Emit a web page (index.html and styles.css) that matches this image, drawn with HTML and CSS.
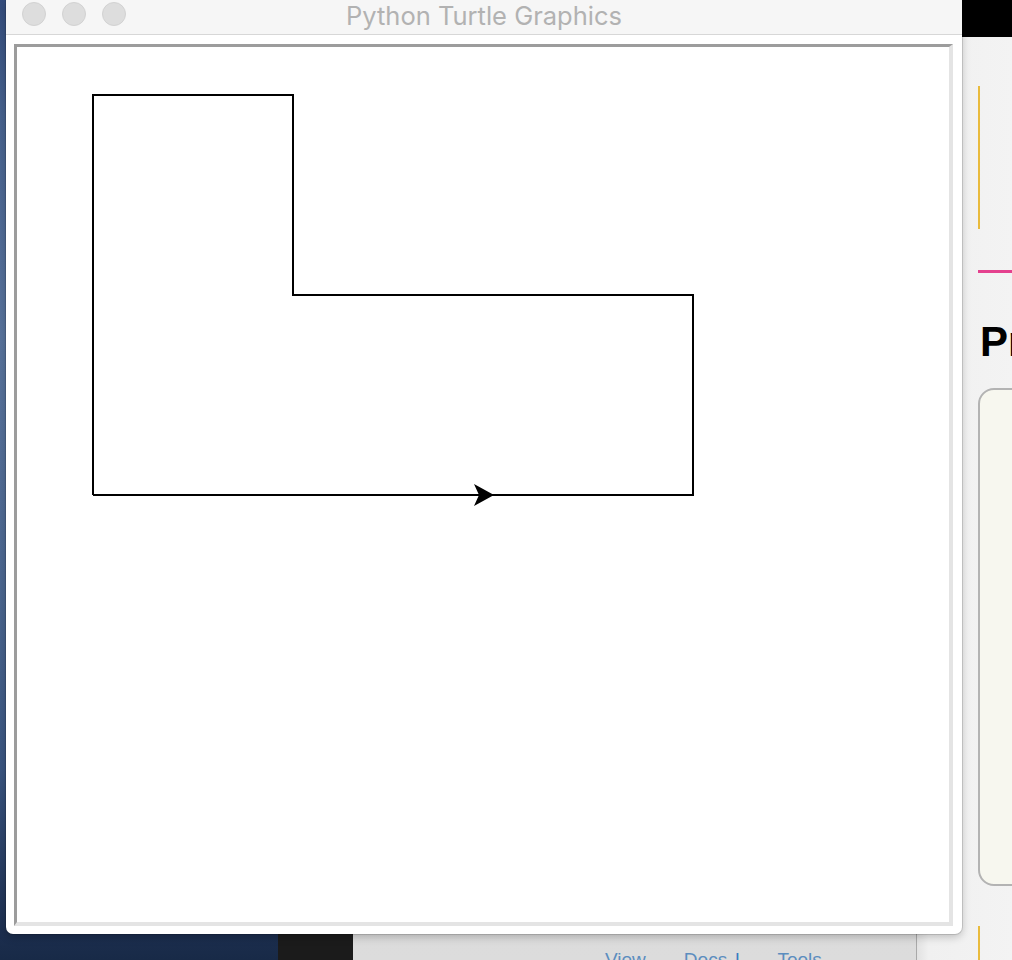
FILE: index.html
```html
<!DOCTYPE html>
<html>
<head>
<meta charset="utf-8">
<title>Python Turtle Graphics</title>
<link rel="stylesheet" href="styles.css">
</head>
<body>
<div class="desktop">
  <div class="dock-dark"></div>
  <div class="browser">
    <div class="browser-top"></div>
    <div class="browser-body">
      <div class="sidebar">
        <div class="sidebar-links">
          <span class="link">View</span>
          <span class="link">Docs</span>
          <span class="link lt">l</span>
          <span class="link">Tools</span>
        </div>
      </div>
      <div class="page">
        <div class="bar-yellow"></div>
        <div class="rule-pink"></div>
        <h2 class="page-title">Project</h2>
        <div class="panel"></div>
        <div class="bar-yellow bar-bottom"></div>
      </div>
    </div>
  </div>

  <div class="turtle-window">
    <div class="titlebar">
      <div class="lights">
        <span class="light"></span>
        <span class="light"></span>
        <span class="light"></span>
      </div>
      <div class="title">Python Turtle Graphics</div>
      <div></div>
    </div>
    <div class="win-body">
      <div class="canvas">
        <svg class="drawing" width="932" height="875" viewBox="17 47 932 875" xmlns="http://www.w3.org/2000/svg">
          <polyline points="93,495 93,95 293,95 293,295 693,295 693,495 93,495" fill="none" stroke="#000" stroke-width="2" stroke-linejoin="miter"/>
          <polygon points="494,495 474,484 479,495 474,506" fill="#000"/>
        </svg>
      </div>
    </div>
  </div>
</div>
</body>
</html>
```

FILE: styles.css
```css
* { box-sizing: border-box; }
html, body { margin: 0; padding: 0; }
body { width: 1012px; height: 960px; overflow: hidden; font-family: "Liberation Sans", Arial, sans-serif; }

.desktop {
  position: relative;
  width: 1012px;
  height: 960px;
  overflow: hidden;
  background: linear-gradient(180deg, #344c7c 0%, #47628e 12%, #58739c 35%, #4c6790 60%, #3a5580 80%, #1c2e4f 97%, #182a47 100%);
}

/* dark app window peeking at the bottom */
.dock-dark {
  position: absolute;
  left: 278px;
  top: 900px;
  width: 75px;
  height: 60px;
  background: #1b1b1b;
}

/* browser behind the turtle window */
.browser {
  position: absolute;
  left: 353px;
  top: 0;
  width: 659px;
  height: 960px;
  display: grid;
  grid-template-rows: 37px 923px;
}
.browser-top { background: #000; }
.browser-body {
  display: grid;
  grid-template-columns: 564px 1fr;
  grid-template-rows: 923px;
  height: 923px;
  overflow: hidden;
}
.sidebar {
  background: linear-gradient(180deg, #cfcfcf 0%, #dcdcdc 100%);
  border-right: 1px solid #a9a9a9;
  display: flex;
  flex-direction: column;
  justify-content: flex-end;
  overflow: hidden;
}
.sidebar-links {
  display: flex;
  align-items: flex-start;
  gap: 38px;
  padding: 0 0 0 252px;
  height: 7px;
  font-size: 19px;
  color: #5b8dbf;
  line-height: 20px;
}
.link { display: block; margin-top: -3px; }
.sidebar-links .lt { margin-left: -30px; color: #3a7cc0; }

.page {
  background: linear-gradient(90deg, #e2e2e2 0%, #f0f0f0 12%, #f3f3f3 100%);
  padding-left: 61px;
  display: flex;
  flex-direction: column;
  align-items: flex-start;
  overflow: hidden;
}
.bar-yellow {
  width: 2px;
  height: 143px;
  margin-top: 49px;
  background: #e9bb3d;
  flex: none;
}
.bar-bottom { margin-top: 40px; height: 34px; }
.rule-pink {
  width: 100%;
  height: 3px;
  margin-top: 41px;
  background: #e4418e;
  flex: none;
}
.page-title {
  margin: 45px 0 0 2px;
  font-size: 42px;
  line-height: 48px;
  font-weight: 700;
  color: #000;
  white-space: nowrap;
  flex: none;
}
.panel {
  margin-top: 22px;
  width: 200px;
  height: 498px;
  flex: none;
  border: 2px solid #b3b3b3;
  border-radius: 16px;
  background: #f7f7ef;
}

/* turtle graphics window */
.turtle-window {
  position: absolute;
  left: 6px;
  top: 0;
  width: 956px;
  height: 934px;
  background: #fff;
  border-radius: 0 0 7px 7px;
  box-shadow: 0 0 0 1px rgba(0,0,0,0.12), 0 3px 8px rgba(0,0,0,0.22);
  display: flex;
  flex-direction: column;
}
.titlebar {
  height: 35px;
  flex: none;
  background: #f6f6f6;
  border-bottom: 1px solid #d7d7d7;
  display: grid;
  grid-template-columns: 1fr auto 1fr;
  align-items: start;
}
.lights {
  display: flex;
  gap: 16px;
  padding: 2px 0 0 16px;
}
.light {
  width: 24px;
  height: 24px;
  border-radius: 50%;
  background: #dddddd;
  border: 1px solid #d2d2d2;
}
.title {
  font-family: "Inter", "Liberation Sans", sans-serif;
  font-size: 25.5px;
  line-height: 31px;
  color: #b2b2b2;
  white-space: nowrap;
}

.win-body {
  flex: 1;
  display: flex;
  padding: 9px 9px 8px 8px;
}
.canvas {
  flex: 1;
  border-top: 3px solid #9c9c9c;
  border-left: 3px solid #9c9c9c;
  border-right: 4px solid #e4e4e4;
  border-bottom: 4px solid #e4e4e4;
  background: #fff;
  overflow: hidden;
}
.drawing { display: block; }
```
